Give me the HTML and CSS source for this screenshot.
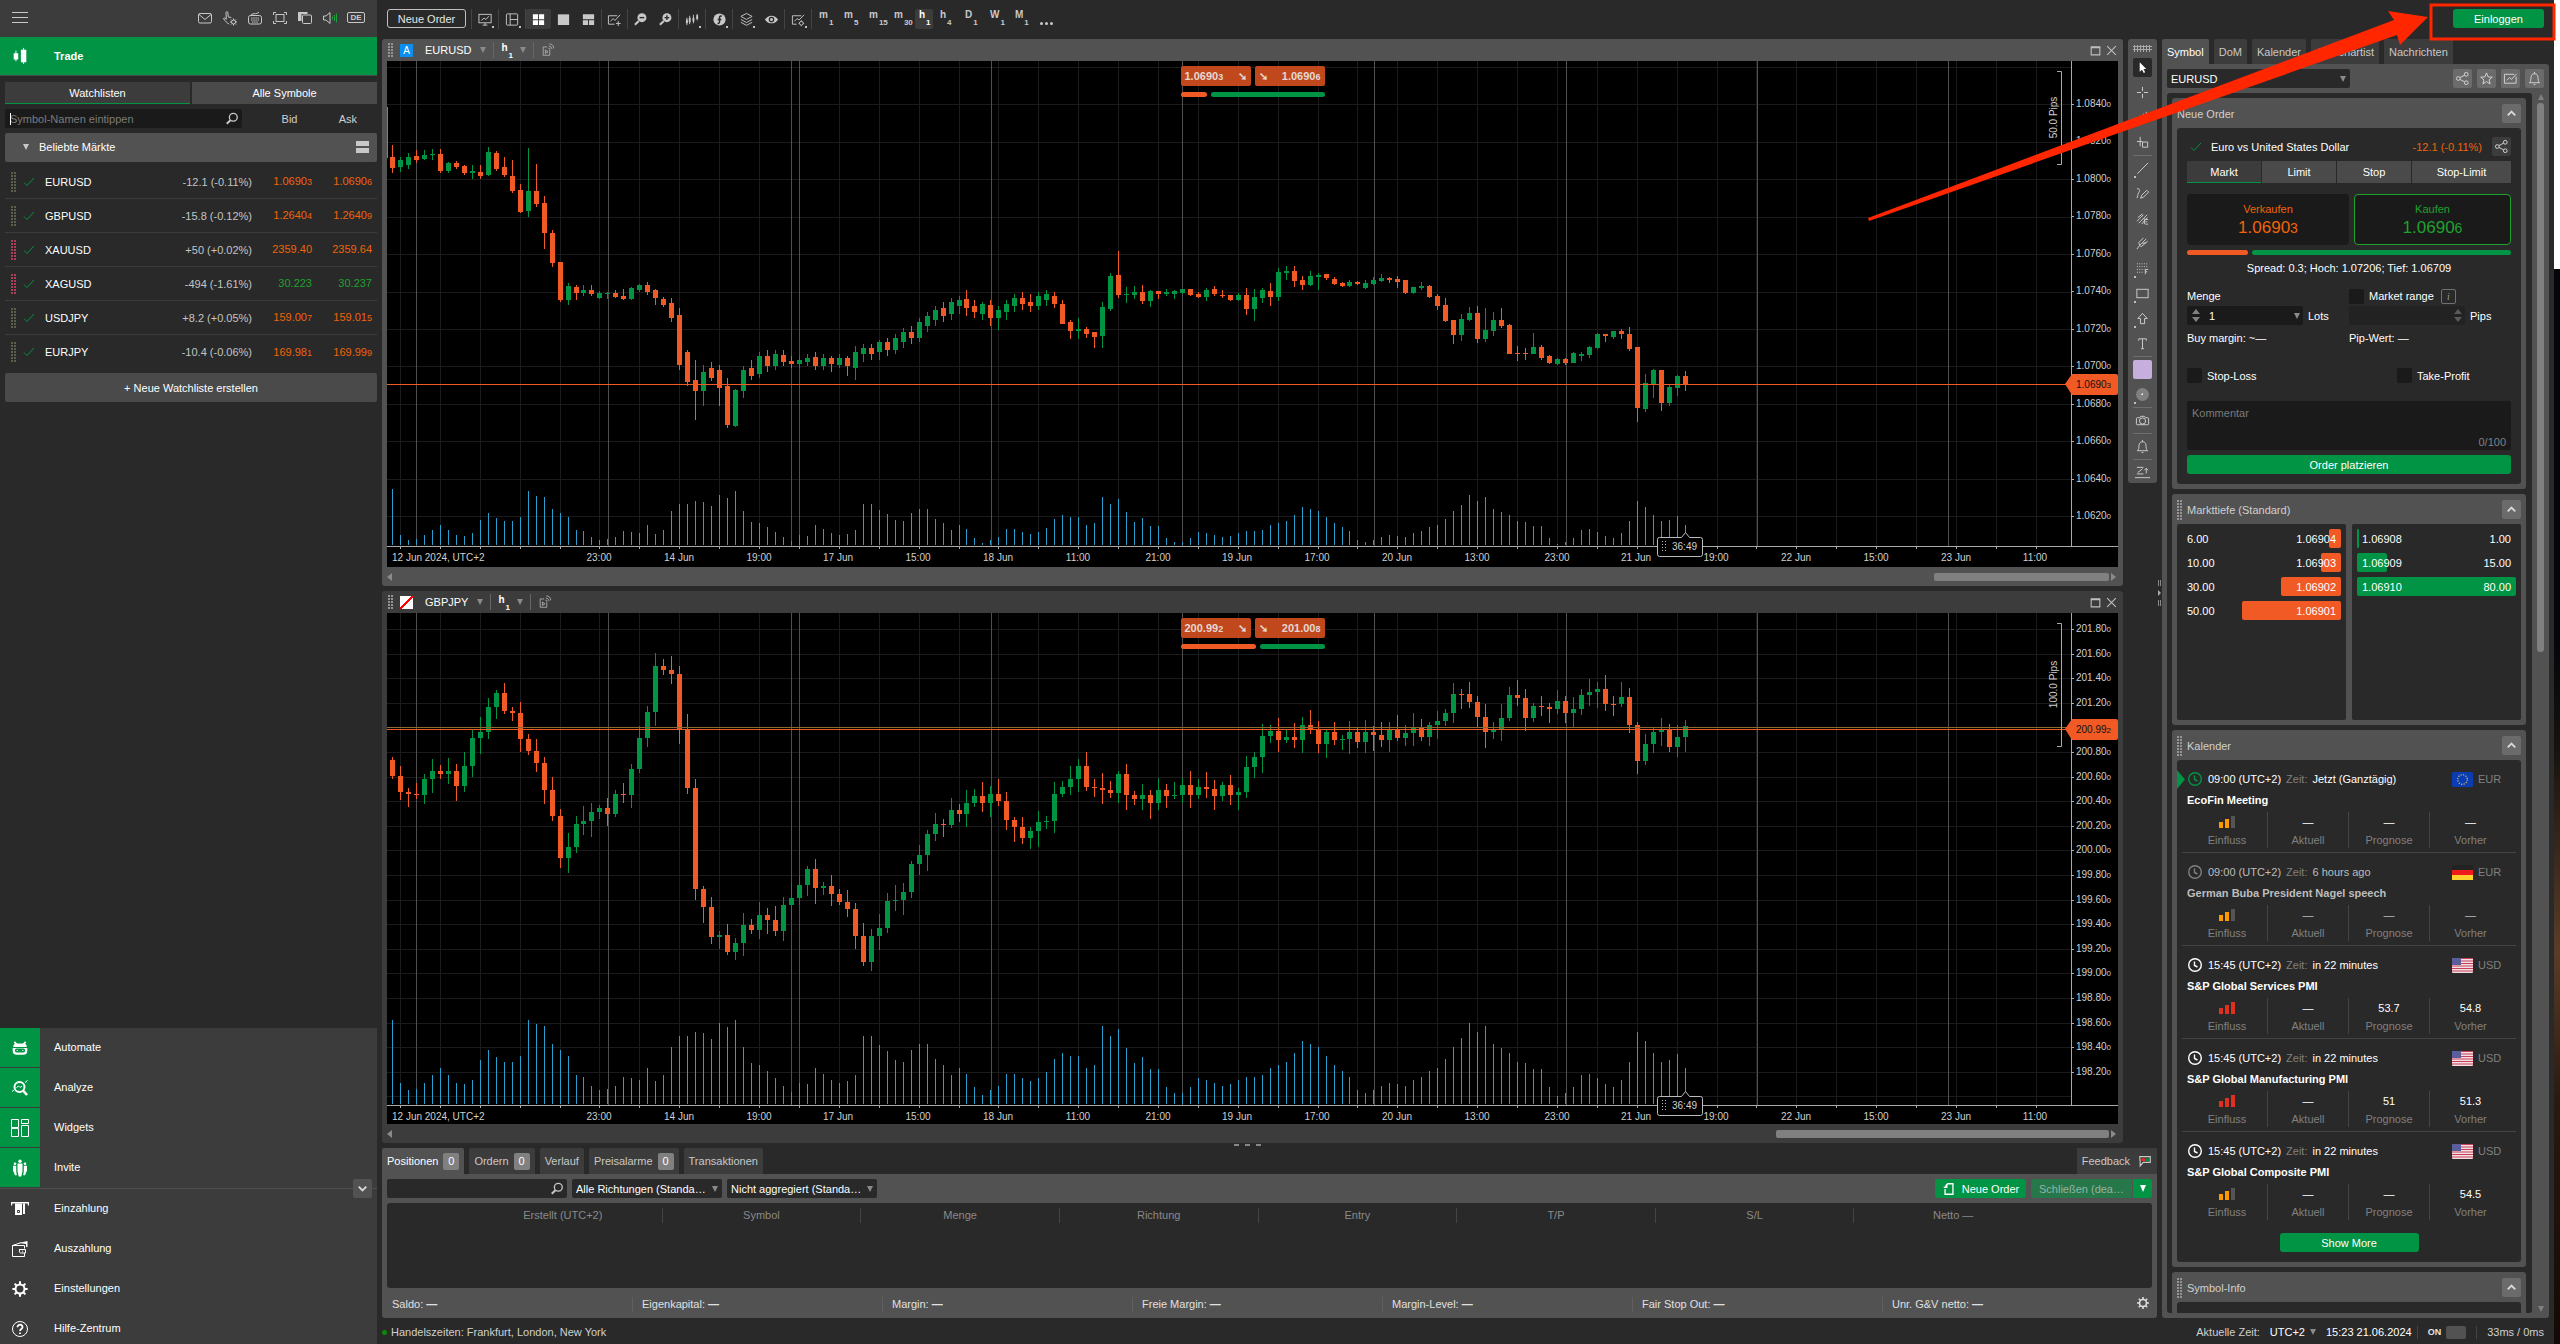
FILE: index.html
```html
<!DOCTYPE html>
<html lang="de">
<head>
<meta charset="utf-8">
<title>Trade</title>
<link rel="stylesheet" href="styles.css">
</head>
<body>
<svg class="defs" aria-hidden="true">
<defs>
<symbol id="i-mail" viewBox="0 0 16 16"><rect x="1.5" y="3.500" width="13" height="9.500" rx="1.500"/><path d="M2 4.500l6 5 6-5"/></symbol>
<symbol id="i-hand" viewBox="0 0 16 16"><path d="M7 14c-2-1-4-3-5.500-5.500.5-1 1.500-.5 2.800.8L4 2.500c.2-1.200 1.600-1.200 1.800 0L6.300 7l3 .5"/><circle cx="11.500" cy="12" r="2"/><path d="M11.500 8.500v1.500M11.500 14v1.500M8 12h1.500M13.500 12H15M9 9.500l1 1M13 13.500l1 1M14 9.500l-1 1M9 14.500l1-1"/></symbol>
<symbol id="i-keyboard" viewBox="0 0 16 16"><rect x="1.500" y="5.500" width="13" height="8.500" rx="2"/><path d="M4 8h8M4 10h8M5 12h6" stroke-dasharray="1.500 .7"/><path d="M4 5.500c0-3 6-.5 8-3.500"/></symbol>
<symbol id="i-full" viewBox="0 0 16 16"><rect x="4" y="4.500" width="8" height="7"/><path d="M1.500 5V2.500H4M12 2.500h2.500V5M14.500 11v2.500H12M4 13.500H1.500V11"/></symbol>
<symbol id="i-copy" viewBox="0 0 16 16"><rect x="5.500" y="5" width="9" height="8.500" rx="1"/><path class="fill" d="M1 2h9.500v2H4.500v7H1z"/></symbol>
<symbol id="i-sound" viewBox="0 0 16 16"><path d="M1.500 6v4h2.500l4 3.500v-11L4 6z"/><path class="green" d="M10.500 6.500v3M12.500 5v6M14.500 3.500v9"/></symbol>
<symbol id="i-search" viewBox="0 0 16 16"><circle cx="9.500" cy="6" r="4.500"/><path d="M6.200 9.500L2 13.500" stroke-width="2.200"/></symbol>
<symbol id="i-check" viewBox="0 0 12 10"><path d="M1 5.500L4 8.500 11 1"/></symbol>
<symbol id="i-candles" viewBox="0 0 16 20"><path class="fill" d="M1 7h5v7H1zM9 3h6v14H9z"/><path d="M3.500 4v12M12 1v18"/></symbol>
<symbol id="i-robot" viewBox="0 0 16 16"><path d="M3 2.500L5 5M13 2.500L11 5" stroke-width="1.500"/><path class="fill" d="M2 7a3 3 0 0 1 3-3h6a3 3 0 0 1 3 3H2zM1.500 8h13v2.500a3.500 3.500 0 0 1-3.500 3.500H5a3.500 3.500 0 0 1-3.500-3.500z"/><rect x="3.500" y="8.500" width="9" height="3.500" rx="1.500" fill="#009444" stroke="none"/><path d="M5 10.200h1M10 10.200h1"/></symbol>
<symbol id="i-analyze" viewBox="0 0 18 18"><circle cx="8.500" cy="8" r="5" stroke-width="2"/><path d="M12.500 12l3.500 4" stroke-width="2.600"/><path d="M5.500 8.500l2-1.500 1.500 1.500 2-1.500M1 12.500l2-1.500M14 3.500l2.500-2"/></symbol>
<symbol id="i-widgets" viewBox="0 0 18 18"><path d="M.5.500h7v8h-7zM.5 9.500h7v8h-7zM10.500.500h7v4h-7zM10.500 6.500h7v11h-7z"/></symbol>
<symbol id="i-invite" viewBox="0 0 18 18"><circle class="fill" cx="9" cy="2.200" r="1.700"/><circle class="fill" cx="4" cy="4.800" r="1.300"/><circle class="fill" cx="14" cy="4.800" r="1.300"/><path class="fill" d="M6.500 4.500h5v7.500l-1.200 5.500H7.700L6.500 12zM2 6.800h3.200v5.500l.6 4H4L2 11.500zM12.800 6.800H16v4.700L14 16.300h-1.800l.6-4z"/></symbol>
<symbol id="i-deposit" viewBox="0 0 18 16"><path d="M.5 4.500V1.800h17v2.700" stroke-width="1.400"/><path class="fill" d="M4 2.500h7V14H4zM12 2.500h2V13h-2z"/><path d="M6.500 9.500h2v2h-2z" stroke="#3c3c3c"/></symbol>
<symbol id="i-wallet" viewBox="0 0 18 18"><path d="M1.500 5.500h12v3M13.500 13v3.500h-12V5.500l9-3M8 9.500h6.500v3.500H9.500C8 13 8 9.500 9.500 9.500zM11 11.200h1"/><path class="fill" d="M8 3l8.500-2v6H15V4z"/></symbol>
<symbol id="i-gear" viewBox="0 0 16 16"><circle cx="8" cy="8" r="4" stroke-width="1.800"/><path stroke-width="1.800" d="M8 1.200v2.500M8 12.300v2.500M1.200 8h2.500M12.300 8h2.500M3.200 3.200l1.700 1.700M11.100 11.100l1.700 1.700M3.200 12.800l1.700-1.700M11.100 4.900l1.700-1.700"/></symbol>
<symbol id="i-help" viewBox="0 0 18 18"><circle cx="9" cy="9" r="7.500"/><path stroke-width="1.800" d="M6.500 7.200c0-3.400 5-3.200 5 0 0 1.800-2.500 1.800-2.500 3.800M9 12.500v1.500"/></symbol>
<symbol id="i-monitor" viewBox="0 0 16 16"><rect x="1" y="2.500" width="13" height="9"/><path d="M3.500 9l3-2.500 2 1.500 3-3.500M5 14h5M7.500 11.500V14"/></symbol>
<symbol id="i-layout" viewBox="0 0 16 16"><rect x="1.500" y="2" width="12" height="12" rx="1"/><path d="M5.500 2v12M5.500 8h8"/></symbol>
<symbol id="i-grid4" viewBox="0 0 16 16"><path class="fill" d="M2 2.500h5.500v5.200H2zM8.500 2.500H14v5.200H8.500zM2 8.700h5.500v5.200H2zM8.500 8.700H14v5.200H8.500z"/></symbol>
<symbol id="i-one" viewBox="0 0 16 16"><path class="fill" d="M2 2.500h12v11.400H2z"/></symbol>
<symbol id="i-three" viewBox="0 0 16 16"><path class="fill" d="M2 2.500h12v5.200H2zM2 8.700h5.500v5.200H2zM8.500 8.700H14v5.200H8.500z"/></symbol>
<symbol id="i-chartplus" viewBox="0 0 16 16"><path d="M8 13H1.500V4H11M3.500 10l3-3 2 2L14 3M12 9.500v5.500M9.500 12.200h5"/></symbol>
<symbol id="i-zoomout" viewBox="0 0 16 16"><circle class="fill" cx="9.500" cy="6" r="4.800"/><path d="M6.200 9.500L2 13.500" stroke-width="2.200"/><path d="M7 6h5" stroke="#292929" stroke-width="1.500"/></symbol>
<symbol id="i-zoomin" viewBox="0 0 16 16"><circle class="fill" cx="9.500" cy="6" r="4.800"/><path d="M6.200 9.500L2 13.500" stroke-width="2.200"/><path d="M7 6h5M9.500 3.500v5" stroke="#292929" stroke-width="1.500"/></symbol>
<symbol id="i-bars" viewBox="0 0 16 16"><path d="M2 6v8M5 4v9M9 3v9M13 2v7"/><path class="fill" d="M1 8h2v4H1zM4 6h2v5H4zM8 6h2v4H8zM12 3.500h2v4h-2z"/></symbol>
<symbol id="i-f" viewBox="0 0 16 16"><circle class="fill" cx="8" cy="8" r="6.500"/><path d="M10.500 4.500C8.500 3.500 8 5 8 6.500v4c0 1.500-1 2-2 1.500M6 8h4" stroke="#292929" stroke-width="1.600"/></symbol>
<symbol id="i-layers" viewBox="0 0 16 16"><path d="M8 1.500l6 3.200-6 3.200-6-3.200zM2 8l6 3.200L14 8M2 11l6 3.200 6-3.200"/></symbol>
<symbol id="i-eye" viewBox="0 0 16 16"><path class="fill" d="M1 8c3.500-5.500 10.500-5.500 14 0-3.500 5.500-10.500 5.500-14 0z"/><circle cx="8" cy="8" r="2.300" stroke="#292929" stroke-width="1.400"/></symbol>
<symbol id="i-chartgear" viewBox="0 0 16 16"><path d="M6 13H1.500V4H11M3.500 10l3-3 2 1.500L14 3"/><circle cx="11" cy="12" r="2"/><path d="M11 8.800v1M11 14.200v1M8 12h1M13 12h1"/></symbol>
<symbol id="i-broadcast" viewBox="0 0 16 16"><path d="M7 4.500H2.500V14H10V8M5 8v4l3-2zM8.500 6h1.500v1.500M9 3.500c2 0 3.500 1.500 3.500 3.500M9.500 1c3 0 5 2 5 5"/></symbol>
<symbol id="i-max" viewBox="0 0 12 12"><path d="M2 2.500h8v7.500H2zM2 3.500h8" /></symbol>
<symbol id="i-close" viewBox="0 0 12 12"><path d="M2 2l8 8M10 2l-8 8"/></symbol>
<symbol id="i-share" viewBox="0 0 16 16"><circle cx="3.500" cy="8" r="2"/><circle cx="12" cy="3.500" r="2"/><circle cx="12" cy="12.500" r="2"/><path d="M5.300 7l5-2.600M5.300 9l5 2.600"/></symbol>
<symbol id="i-star" viewBox="0 0 16 16"><path d="M8 2l1.700 4.300 4.500.2-3.500 2.900 1.200 4.400L8 11.300l-3.900 2.500 1.200-4.400L1.800 6.500l4.500-.2z"/></symbol>
<symbol id="i-chart" viewBox="0 0 16 16"><path d="M14 6v7H1.500V3.500H12M4 10l3-3 2 2 5.500-6"/></symbol>
<symbol id="i-bell" viewBox="0 0 16 16"><path d="M2.500 12.500C4.500 11 4 9 4.300 6.500 4.600 4 6 3 8 3s3.400 1 3.700 3.500c.3 2.500-.2 4.500 1.800 6zM8 1v2M7 14.500h2"/></symbol>
<symbol id="i-up" viewBox="0 0 12 12"><path d="M3 7.500l3-3 3 3" stroke-width="1.500"/></symbol>
<symbol id="i-down" viewBox="0 0 12 12"><path d="M3 4.500l3 3 3-3" stroke-width="1.500"/></symbol>
<symbol id="i-clock" viewBox="0 0 16 16"><circle cx="8" cy="8" r="6.300" stroke-width="1.400"/><path d="M7.500 4.500v4l3 1.500" stroke-width="1.400"/></symbol>
<symbol id="i-cursor" viewBox="0 0 16 16"><path class="fill" d="M5 2.500v10l2.500-2.200 1.800 3.500 1.500-.8-1.700-3.400H12z"/></symbol>
<symbol id="i-cross" viewBox="0 0 16 16"><path d="M8 2v4.500M8 9.500V14M2 8h4.500M9.500 8H14"/></symbol>
<symbol id="i-diag" viewBox="0 0 16 16"><path d="M3 13l10-7M6 12V6M9 10V4M12 9V2"/></symbol>
<symbol id="i-crossbox" viewBox="0 0 16 16"><path d="M5.500 2v10M2 7h6M8 7.500h5.500v5.500H8z"/></symbol>
<symbol id="i-line" viewBox="0 0 16 16"><path d="M2.500 13.500L14 2"/></symbol>
<symbol id="i-pen" viewBox="0 0 16 16"><path d="M6 13l1-3 5.500-5.500 2 2L9 12zM2 3c3-1 3.500 2 2 4s-1 5-2 6"/></symbol>
<symbol id="i-trend" viewBox="0 0 16 16"><path d="M2 11l7-7M4 13l9-9M7 14l6-7M3 7l5-4M10 8v6M11 9h3M11 11.500h2M11 14h3"/></symbol>
<symbol id="i-fork" viewBox="0 0 16 16"><path d="M2 14l3-4 7-7M5 10l1.500 1.500 7-6M5 10l-1-3 5-5M8 8l4-1"/></symbol>
<symbol id="i-dots" viewBox="0 0 16 16"><path d="M2 3h12M2 6h12M2 9h8M2 12h6" stroke-dasharray="1 1.500"/><path d="M11 14V9h3M11 11.500h2"/></symbol>
<symbol id="i-rect" viewBox="0 0 16 16"><rect x="2" y="3.500" width="12" height="9"/></symbol>
<symbol id="i-arrowup" viewBox="0 0 16 16"><path d="M8 2.500L3 8h2.800v5.500h4.400V8H13z"/></symbol>
<symbol id="i-text" viewBox="0 0 16 16"><path d="M4 5V3h8v2M8 3v10.500M6.500 13.500h3"/></symbol>
<symbol id="i-camera" viewBox="0 0 16 16"><path d="M2.500 5H5l1-1.500h4L11 5h2.500a1 1 0 0 1 1 1v5.500a1 1 0 0 1-1 1h-11a1 1 0 0 1-1-1V6a1 1 0 0 1 1-1z"/><circle cx="8" cy="8.500" r="3.300"/></symbol>
<symbol id="i-sort" viewBox="0 0 16 16"><path d="M2 2.500h7M2 9.500h7M0 13.500h16M3 8l5-4M12 9V3.500M10 5.500l2-2 2 2"/></symbol>
<symbol id="i-doc" viewBox="0 0 16 16"><path d="M3.500 8v6h9V2h-6L4 4.500M2 6h3.500V3" stroke-width="1.500"/></symbol>
<symbol id="i-feedback" viewBox="0 0 16 14"><path d="M2 1.500h12v6.500H6L2.500 12V8z" stroke-width="1.300"/><path d="M4 3.500h4v3H4z" fill="#f22" stroke="none"/><path d="M8.500 3.500h4v3h-4z" fill="#009444" stroke="none"/></symbol>
<symbol id="f-eu" viewBox="0 0 21 15"><rect width="21" height="15" rx="1.500" fill="#0a3cb4" stroke="none"/><circle cx="10.500" cy="7.500" r="4.800" fill="none" stroke="#d9c64a" stroke-width="1.200" stroke-dasharray="1.200 1.310"/></symbol>
<symbol id="f-de" viewBox="0 0 21 15"><path fill="#222" stroke="none" d="M0 0h21v5H0z"/><path fill="#f01c1c" stroke="none" d="M0 5h21v5H0z"/><path fill="#fdd22f" stroke="none" d="M0 10h21v5H0z"/></symbol>
<symbol id="f-us" viewBox="0 0 21 15"><rect width="21" height="15" rx="1" fill="#f2dfe2" stroke="none"/><path d="M0 .5h21M0 3h21M0 5.500h21M0 8h21M0 10.500h21M0 13h21" stroke="#c8405a" stroke-width="1.200"/><rect width="9" height="7" fill="#5a5f9c" stroke="none"/></symbol>
</defs>
</svg>

<div class="app">
  <aside class="nav">
    <header class="nav-top">
      <button class="bare burger" aria-label="Menü"><i></i><i></i><i></i></button>
      <div class="nav-icons">
        <svg><use href="#i-mail"/></svg><svg><use href="#i-hand"/></svg><svg><use href="#i-keyboard"/></svg><svg><use href="#i-full"/></svg><svg><use href="#i-copy"/></svg><svg><use href="#i-sound"/></svg><button class="bare lang">DE</button>
      </div>
    </header>
    <a href="#" class="nav-trade"><svg><use href="#i-candles"/></svg>Trade</a>
    <div class="watch">
      <div class="tabs2"><button class="on">Watchlisten</button><button>Alle Symbole</button></div>
      <div class="watch-search">
        <label class="search"><input type="text" placeholder="Symbol-Namen eintippen" aria-label="Symbol-Namen eintippen"><span class="caret"></span><svg><use href="#i-search"/></svg></label>
        <span>Bid</span><span>Ask</span>
      </div>
      <button class="watch-group"><span class="tri"></span>Beliebte Märkte<span class="rows"></span></button>
      <ul class="watch-list" id="watch"></ul>
      <button class="watch-add">+ Neue Watchliste erstellen</button>
    </div>
    <nav class="menu">
      <a href="#" class="app-link"><span><svg><use href="#i-robot"/></svg></span>Automate</a>
      <a href="#" class="app-link"><span><svg><use href="#i-analyze"/></svg></span>Analyze</a>
      <a href="#" class="app-link"><span><svg><use href="#i-widgets"/></svg></span>Widgets</a>
      <a href="#" class="app-link"><span><svg><use href="#i-invite"/></svg></span>Invite</a>
      <div class="menu-rest">
        <button class="sq fold" aria-label="Einklappen"><svg><use href="#i-down"/></svg></button>
        <a href="#"><span><svg><use href="#i-deposit"/></svg></span>Einzahlung</a>
        <a href="#"><span><svg><use href="#i-wallet"/></svg></span>Auszahlung</a>
        <a href="#"><span><svg><use href="#i-gear"/></svg></span>Einstellungen</a>
        <a href="#"><span><svg><use href="#i-help"/></svg></span>Hilfe-Zentrum</a>
      </div>
    </nav>
  </aside>

  <div class="work">
    <header class="toolbar">
      <button class="neworder">Neue Order</button>
      <div class="tools">
        <span class="grp"><button class="sub"><svg><use href="#i-monitor"/></svg></button></span>
        <span class="grp"><button class="sub"><svg><use href="#i-layout"/></svg></button></span>
        <span class="grp"><button class="on"><svg><use href="#i-grid4"/></svg></button><button><svg><use href="#i-one"/></svg></button><button><svg><use href="#i-three"/></svg></button></span>
        <span class="grp"><button><svg><use href="#i-chartplus"/></svg></button></span>
        <span class="grp"><button><svg><use href="#i-zoomout"/></svg></button><button><svg><use href="#i-zoomin"/></svg></button></span>
        <span class="grp"><button class="sub"><svg><use href="#i-bars"/></svg></button></span>
        <span class="grp"><button class="sub"><svg><use href="#i-f"/></svg></button></span>
        <span class="grp"><button class="sub"><svg><use href="#i-layers"/></svg></button><button><svg><use href="#i-eye"/></svg></button></span>
        <span class="grp"><button class="sub"><svg><use href="#i-chartgear"/></svg></button></span>
        <span class="grp frames"><button>m<sub>1</sub></button><button>m<sub>5</sub></button><button>m<sub>15</sub></button><button>m<sub>30</sub></button><button class="on">h<sub>1</sub></button><button>h<sub>4</sub></button><button>D<sub>1</sub></button><button>W<sub>1</sub></button><button>M<sub>1</sub></button><button class="more" aria-label="Mehr"><i></i><i></i><i></i></button></span>
      </div>
      <button class="login">Einloggen</button>
    </header>

    <div class="body">
      <div class="center">
        <div class="upper">
          <div class="charts">
            <section class="chart active">
              <header><span class="grip"></span><span class="tag-a">A</span><b>EURUSD</b><span class="tri"></span><i></i><span class="tf">h<sub>1</sub></span><span class="tri"></span><i></i><svg><use href="#i-broadcast"/></svg><span class="win"><svg><use href="#i-max"/></svg><svg><use href="#i-close"/></svg></span></header>
              <div class="plot"><svg id="plot1" viewBox="0 0 1731 506" preserveAspectRatio="xMaxYMin slice"></svg>
                <div class="quote"><button><span>1.0690<small>3</small></span><em>➘</em></button><button><em>➘</em><span>1.0690<small>6</small></span></button><div class="split"><i style="width:26px"></i><i></i></div></div>
              </div>
              <div class="hscroll"><span class="l"></span><i style="width:175px"></i><span class="r"></span></div>
            </section>
            <section class="chart">
              <header><span class="grip"></span><span class="tag-n"></span><b>GBPJPY</b><span class="tri"></span><i></i><span class="tf">h<sub>1</sub></span><span class="tri"></span><i></i><svg><use href="#i-broadcast"/></svg><span class="win"><svg><use href="#i-max"/></svg><svg><use href="#i-close"/></svg></span></header>
              <div class="plot"><svg id="plot2" viewBox="0 0 1731 512" preserveAspectRatio="xMaxYMin slice"></svg>
                <div class="quote"><button><span>200.99<small>2</small></span><em>➘</em></button><button><em>➘</em><span>201.00<small>8</small></span></button><div class="split"><i style="width:75px"></i><i></i></div></div>
              </div>
              <div class="hscroll"><span class="l"></span><i style="width:333px"></i><span class="r"></span></div>
            </section>
          </div>
          <div class="strip">
            <span class="dots"></span>
            <button class="on"><svg><use href="#i-cursor"/></svg></button>
            <button><svg><use href="#i-cross"/></svg></button>
            <button><svg><use href="#i-diag"/></svg></button>
            <button><svg><use href="#i-crossbox"/></svg></button>
            <hr>
            <button class="sub"><svg><use href="#i-line"/></svg></button>
            <button><svg><use href="#i-pen"/></svg></button>
            <button><svg><use href="#i-trend"/></svg></button>
            <button><svg><use href="#i-fork"/></svg></button>
            <button class="sub"><svg><use href="#i-dots"/></svg></button>
            <button class="sub"><svg><use href="#i-rect"/></svg></button>
            <button class="sub"><svg><use href="#i-arrowup"/></svg></button>
            <button><svg><use href="#i-text"/></svg></button>
            <hr>
            <button class="swatch" aria-label="Farbe"></button>
            <button class="sub"><span class="dot"></span></button>
            <hr>
            <button><svg><use href="#i-camera"/></svg></button>
            <hr>
            <button><svg><use href="#i-bell"/></svg></button>
            <hr>
            <button><svg><use href="#i-sort"/></svg></button>
          </div>
          <span class="vhandle"><i></i><b></b><i></i></span>
        </div>
        <section class="positions">
          <span class="hhandle"><i></i><i></i><i></i></span>
          <div class="ptabs"><button class="on">Positionen<span>0</span></button><button>Ordern<span>0</span></button><button>Verlauf</button><button>Preisalarme<span>0</span></button><button>Transaktionen</button><a href="#" class="feedback">Feedback<svg><use href="#i-feedback"/></svg></a></div>
          <div class="pbody">
            <div class="filters">
              <label class="search"><input type="text" aria-label="Suche"><svg><use href="#i-search"/></svg></label>
              <label class="select"><select aria-label="Richtung"><option>Alle Richtungen (Standa…</option></select></label>
              <label class="select"><select aria-label="Aggregation"><option>Nicht aggregiert (Standa…</option></select></label>
              <button class="pnew"><svg><use href="#i-doc"/></svg>Neue Order</button>
              <button class="pclose">Schließen (dea…</button><button class="pmore" aria-label="Mehr"></button>
            </div>
            <table class="ptable"><thead><tr><th class="pad"></th><th>Erstellt (UTC+2)</th><th>Symbol</th><th>Menge</th><th>Richtung</th><th>Entry</th><th>T/P</th><th>S/L</th><th class="last">Netto —</th><th class="end"></th></tr></thead></table>
            <div class="totals"><span>Saldo: <b>—</b></span><span>Eigenkapital: <b>—</b></span><span>Margin: <b>—</b></span><span>Freie Margin: <b>—</b></span><span>Margin-Level: <b>—</b></span><span>Fair Stop Out: <b>—</b></span><span>Unr. G&amp;V netto: <b>—</b></span><button class="bare" aria-label="Einstellungen"><svg><use href="#i-gear"/></svg></button></div>
          </div>
        </section>
      </div>

      <aside class="side">
        <div class="stabs"><button class="on">Symbol</button><button>DoM</button><button>Kalender</button><button>Autochartist</button><button>Nachrichten</button></div>
        <div class="sbody">
          <div class="spick">
            <label class="select"><select aria-label="Symbol"><option>EURUSD</option></select></label>
            <button class="sq"><svg><use href="#i-share"/></svg></button><button class="sq"><svg><use href="#i-star"/></svg></button><button class="sq"><svg><use href="#i-chart"/></svg></button><button class="sq"><svg><use href="#i-bell"/></svg></button>
          </div>
          <div class="scroller">
            <div class="cards">
              <section class="card">
                <h2>Neue Order<button class="sq" aria-label="Einklappen"><svg><use href="#i-up"/></svg></button></h2>
                <form class="order">
                  <div class="pair"><svg class="ok"><use href="#i-check"/></svg><span>Euro vs United States Dollar</span><em>-12.1 (-0.11%)</em><button type="button" class="sq"><svg><use href="#i-share"/></svg></button></div>
                  <div class="otabs"><button type="button" class="on">Markt</button><button type="button">Limit</button><button type="button">Stop</button><button type="button">Stop-Limit</button></div>
                  <div class="deal"><button type="button" class="sell">Verkaufen<b>1.0690<small>3</small></b></button><button type="button" class="buy">Kaufen<b>1.0690<small>6</small></b></button></div>
                  <div class="split"><i style="width:61px"></i><i></i></div>
                  <p class="spread">Spread: 0.3; Hoch: 1.07206; Tief: 1.06709</p>
                  <div class="qty">
                    <div><label class="ln" for="qty">Menge</label><div class="field"><span class="num"><input id="qty" type="text" value="1"><i class="sp"></i><span class="tri"></span></span>Lots</div><p>Buy margin: ~—</p></div>
                    <div><div class="ln"><label><input type="checkbox">Market range</label><span class="info">i</span></div><div class="field"><span class="num pips"><input type="text" disabled aria-label="Pips"><i class="sp"></i></span>Pips</div><p>Pip-Wert: —</p></div>
                  </div>
                  <div class="stops"><label><input type="checkbox">Stop-Loss</label><label><input type="checkbox">Take-Profit</label></div>
                  <div class="comment"><textarea placeholder="Kommentar" aria-label="Kommentar"></textarea><span>0/100</span></div>
                  <button type="button" class="green-btn">Order platzieren</button>
                </form>
              </section>
              <section class="card">
                <h2><span class="grip"></span>Markttiefe (Standard)<button class="sq" aria-label="Einklappen"><svg><use href="#i-up"/></svg></button></h2>
                <div class="depth">
                  <ul><li>6.00<span>1.06904</span><i style="width:12px"></i></li><li>10.00<span>1.06903</span><i style="width:20px"></i></li><li>30.00<span>1.06902</span><i style="width:60px"></i></li><li>50.00<span>1.06901</span><i style="width:99px"></i></li></ul>
                  <ul class="ask"><li><span>1.06908</span>1.00<i style="width:2px"></i></li><li><span>1.06909</span>15.00<i style="width:30px"></i></li><li><span>1.06910</span>80.00<i style="width:100%"></i></li></ul>
                </div>
              </section>
              <section class="card">
                <h2><span class="grip"></span>Kalender<button class="sq" aria-label="Einklappen"><svg><use href="#i-up"/></svg></button></h2>
                <div class="cal"><div id="events"></div><button class="green-btn">Show More</button></div>
              </section>
              <section class="card">
                <h2><span class="grip"></span>Symbol-Info<button class="sq" aria-label="Einklappen"><svg><use href="#i-up"/></svg></button></h2>
                <div class="empty"></div>
              </section>
            </div>
            <div class="vscroll"><span class="u"></span><i></i><span class="d"></span></div>
          </div>
        </div>
      </aside>
    </div>

    <footer class="status"><span class="live"></span>Handelszeiten: Frankfurt, London, New York
      <div class="clock"><span>Aktuelle Zeit:</span><button class="bare">UTC+2<span class="tri"></span></button><strong>15:23 21.06.2024</strong><i></i><label>ON<input type="checkbox"></label><i></i><span>33ms / 0ms</span></div>
    </footer>
  </div>
  <div class="edge"></div>
  <svg class="pointer" viewBox="0 0 700 224"><path d="M8 218L534 20l-6-9 40 6-28 28-3-10L9 221z" fill="#ff2600" stroke="none"/><rect x="571" y="5" width="123" height="34" fill="none" stroke="#ff2600" stroke-width="3"/></svg>
</div>
<script src="script.js"></script>
</body>
</html>
```
FILE: styles.css
```css
* { box-sizing: border-box; }
body { margin: 0; background: #292929; color: #e6e6e6; font: 11px/14px "Liberation Sans", Arial, sans-serif; }
button, input, select, textarea { font: inherit; color: inherit; border: 0; background: none; padding: 0; margin: 0; border-radius: 0; }
ul, p, h2 { margin: 0; padding: 0; list-style: none; font: inherit; }
a { color: inherit; text-decoration: none; }
svg { width: 16px; height: 16px; flex: none; fill: none; stroke: currentColor; stroke-width: 1; }
.fill { fill: currentColor; stroke: none; }
.green { stroke: #1f9d3f; }
.defs { position: absolute; width: 0; height: 0; }
small { font-size: 9px; }
.tri { width: 0; height: 0; border: 3px solid transparent; border-top: 6px solid #8a8a8a; border-bottom: 0; flex: none; }
.sq { width: 19px; height: 19px; border-radius: 2px; background: #6b6b6b; color: #d8d8d8; display: grid; place-items: center; flex: none; }
.grip { width: 5px; height: 20px; flex: none; background: repeating-linear-gradient(#959595 0 2px, transparent 2px 3px); -webkit-mask: linear-gradient(90deg, #000 2px, transparent 2px 3px, #000 3px); mask: linear-gradient(90deg, #000 2px, transparent 2px 3px, #000 3px); }

.app { position: relative; display: flex; height: 100vh; overflow: hidden; }
.nav { width: 377px; flex: none; display: flex; flex-direction: column; }
.nav-top { height: 37px; flex: none; background: #3c3c3c; display: flex; align-items: center; justify-content: space-between; padding: 0 12px 2px; }
.burger { display: grid; gap: 4px; width: 16px; }
.burger i { height: 1px; background: #c8c8c8; }
.nav-icons { display: flex; gap: 9px; color: #c8c8c8; align-items: center; }
.lang { border: 1px solid #c8c8c8; border-radius: 2px; width: 18px; height: 11px; font-size: 8px; line-height: 9px; font-weight: bold; }
.nav-trade { height: 39px; flex: none; background: #009444; color: #fff; font-weight: bold; display: flex; align-items: center; gap: 26px; padding-left: 12px; border-bottom: 1px solid #4a4a4a; }
.nav-trade svg { width: 16px; height: 18px; }
.watch { flex: 1; padding: 6px 0 0 5px; min-height: 0; }
.tabs2 { display: grid; grid-template-columns: 1fr 1fr; gap: 2px; }
.tabs2 button, .otabs button { height: 22px; background: #4a4a4a; color: #fff; }
.tabs2 .on, .otabs .on { background: #3c3c3c; border-bottom: 1px solid #009444; }
.watch-search { display: flex; align-items: center; margin: 5px 0 5px; color: #d0d0d0; }
.search { position: relative; width: 240px; height: 19px; background: #1a1a1a; border-radius: 2px; display: flex; align-items: center; padding: 0 3px 0 5px; color: #c8c8c8; }
.search input { flex: 1; min-width: 0; outline: 0; }
.search svg { width: 14px; height: 14px; stroke-width: 1.5; }
::placeholder { color: #7a7a7a; opacity: 1; }
.caret { position: absolute; left: 5px; top: 4px; width: 1px; height: 12px; background: #fff; }
.watch-search > span { width: 59px; text-align: center; }
.watch-search > span:first-of-type { margin-left: 18px; }
.watch-group { width: 100%; height: 29px; border-radius: 2px; background: #525252; display: flex; align-items: center; padding: 0 8px 1px 18px; gap: 10px; color: #fff; }
.watch-group .tri { border-top-color: #c8c8c8; }
.rows { margin-left: auto; width: 13px; height: 12px; background: linear-gradient(#c8c8c8 5px, transparent 5px 7px, #c8c8c8 7px); }
.watch-list { padding-top: 3px; }
.watch-list li { height: 34px; display: flex; align-items: center; border-bottom: 1px solid #3c3c3c; padding: 0 5px 0 6px; color: #fff; }
.watch-list li:last-child { border: 0; }
.watch-list .grip { background: repeating-linear-gradient(#5e5e4e 0 2px, transparent 2px 3px); }
.watch-list .hot .grip { background: repeating-linear-gradient(#a8405a 0 2px, transparent 2px 3px); }
.ok { width: 12px; height: 10px; margin: 0 10px 0 7px; color: #009444; stroke-width: 1; }
.watch-list em { margin-left: auto; font-style: normal; color: #c4c4c4; }
.watch-list b { width: 60px; text-align: right; font-weight: normal; color: #ee6409; }
.watch-list .upc b { color: #1fa12e; }
.watch-add { width: 100%; height: 29px; background: #4a4a4a; border-radius: 2px; margin-top: 4px; color: #fff; }
.menu { background: #3c3c3c; flex: none; color: #fff; }
.menu a { display: flex; height: 40px; align-items: center; gap: 14px; padding-bottom: 2px; }
.menu a span { width: 40px; height: 39px; display: grid; place-items: center; align-self: flex-start; color: #fff; }
.menu svg { width: 18px; height: 18px; }
.menu .app-link span { background: #009444; }
.menu-rest { position: relative; border-top: 1px solid #4e4e4e; height: 156px; overflow: clip; overflow-clip-margin: 12px; }
.fold { position: absolute; right: 5px; top: -10px; background: #525252; }
.fold svg, .sq svg { width: 15px; height: 15px; }

.work { flex: 1; min-width: 0; display: flex; flex-direction: column; padding: 0 5px; }
.toolbar { height: 39px; flex: none; display: flex; padding: 0 5px; }
.neworder { width: 79px; height: 19px; margin: 9px 5px 0 0; border: 1px solid #c0c0c0; border-radius: 3px; }
.tools { display: flex; height: 20px; margin-top: 9px; color: #c8c8c8; }
.grp { display: flex; border-left: 1px solid #444; }
.tools button { width: 25px; position: relative; display: grid; place-items: center; }
.tools button.sub { width: 26px; }
.tools svg { width: 15px; height: 15px; }
.tools .on { background: #3c3c3c; color: #fff; border-radius: 2px; }
.sub { position: relative; }
.sub::after { content: ""; position: absolute; right: 4px; bottom: 1px; border: 1px solid #c0c0c0; }
.frames { font-size: 10px; font-weight: bold; padding-left: 3px; }
.tools .frames button { display: block; line-height: 12px; text-align: left; padding: 0 0 8px 4px; }
.frames sub, .tf sub { font-size: 8px; vertical-align: -7px; line-height: 1px; margin-left: 1px; }
.tools .frames .on { width: 18px; margin: 0 3px 0 0; }
.tools .frames .more { display: flex; gap: 2px; padding: 8px 0 0 4px; }
.more i { width: 3px; height: 3px; border-radius: 50%; background: #c8c8c8; }
.login { margin: 9px 0 0 auto; width: 91px; height: 19px; background: #009444; color: #fff; border-radius: 3px; }
.body { flex: 1; min-height: 0; display: flex; gap: 5px; }
.center { flex: 1; min-width: 0; display: flex; flex-direction: column; gap: 5px; }
.upper { flex: 1; min-height: 0; display: flex; gap: 5px; position: relative; }
.charts { flex: 1; min-width: 0; display: grid; grid-template-rows: minmax(0, 547fr) minmax(0, 552fr); gap: 5px; }
.chart { background: #3c3c3c; border-radius: 3px; display: flex; flex-direction: column; padding: 0 5px; min-width: 0; }
.chart.active { background: #525252; }
.chart header { height: 22px; flex: none; display: flex; align-items: center; gap: 7px; color: #fff; }
.chart header b { font-weight: normal; margin-right: 2px; }
.chart header i { width: 1px; height: 16px; background: #666; }
.chart header .grip { margin-left: 1px; height: 15px; }
.chart header svg { width: 14px; height: 14px; color: #b0b0b0; }
.tag-a { width: 13px; height: 13px; background: #0a8ef0; display: grid; place-items: center; font-size: 10px; color: #fff; margin-right: 5px; }
.tag-n { width: 13px; height: 13px; background: linear-gradient(to bottom right, #fff 44%, #f00 44% 56%, #fff 56%); margin-right: 5px; }
.tf { font-weight: bold; font-size: 10px; margin-top: -4px; }
.win { margin-left: auto; display: flex; gap: 3px; }
.chart header .win svg { width: 13px; height: 13px; color: #c0c0c0; }
.plot { flex: 1; min-height: 0; background: #000; position: relative; overflow: hidden; }
.plot > svg { width: 100%; height: 100%; display: block; }
.plot text { fill: #d0d0d0; stroke: none; font-size: 10px; }
.plot text tspan { font-size: 8px; }
.quote { position: absolute; top: 5px; left: 50%; width: 144px; margin-left: -72px; display: grid; grid-template-columns: 1fr 1fr; gap: 6px 4px; }
.quote button { height: 20px; border-radius: 2px; background: #c1481d; color: #e4d8d2; font-weight: bold; display: flex; justify-content: space-between; align-items: center; padding: 0 4px; }
.quote em { font-style: normal; }
.split { display: flex; gap: 4px; height: 5px; grid-column: 1 / -1; }
.split i { background: #f15a24; border-radius: 3px; }
.split i + i { background: #009444; flex: 1; }
.hscroll { height: 19px; flex: none; display: flex; align-items: center; }
.hscroll i { height: 8px; margin-left: auto; margin-right: 2px; border-radius: 2px; background: #808080; }
.hscroll span { border: 4px solid transparent; }
.hscroll .l { border-right: 5px solid #8a8a8a; border-left: 0; }
.hscroll .r { border-left: 5px solid #8a8a8a; border-right: 2px solid transparent; }
.strip { width: 29px; flex: none; align-self: flex-start; background: #525252; border-radius: 3px; padding: 6px 5px 1px; display: flex; flex-direction: column; gap: 6px; color: #d0d0d0; }
.strip button { width: 19px; height: 19px; display: grid; place-items: center; border-radius: 2px; }
.strip .on { background: #292929; color: #fff; }
.strip svg { width: 15px; height: 15px; }
.strip hr { width: 100%; height: 1px; border: 0; margin: -3px 0; background: #6e6e6e; flex: none; }
.strip .sub::after { right: auto; left: 1px; bottom: 0; }
.dots { height: 7px; background: radial-gradient(#aaa 50%, transparent 60%) 0 0 / 3px 3px; }
.strip .swatch { background: #c6aedd; }
.dot { width: 13px; height: 13px; border-radius: 50%; background: radial-gradient(#ddd 1px, #808080 1px); }
.vhandle { position: absolute; right: -4px; top: 49%; display: grid; gap: 4px; }
.vhandle i { width: 3px; height: 6px; border: solid #888; border-width: 0 1px; }
.vhandle b { border: 3px solid transparent; border-left-color: #aaa; border-right: 0; }

.positions { height: 170px; flex: none; position: relative; display: flex; flex-direction: column; }
.hhandle { position: absolute; top: -4px; left: 48%; display: flex; gap: 6px; }
.hhandle i { width: 5px; height: 2px; background: #888; }
.ptabs, .stabs { display: flex; gap: 5px; height: 26px; flex: none; color: #c8c8c8; }
.ptabs button, .stabs button { background: #3c3c3c; border-radius: 2px 2px 0 0; padding: 0 5px; }
.ptabs .on, .stabs .on { background: #525252; color: #fff; }
.ptabs button span { display: inline-block; margin-left: 5px; width: 16px; background: #808080; border-radius: 2px; height: 17px; line-height: 17px; color: #fff; }
.feedback { margin-left: auto; background: #3c3c3c; display: flex; align-items: center; gap: 8px; padding: 0 5px; }
.feedback svg { width: 14px; height: 13px; }
.pbody { flex: 1; background: #525252; border-radius: 0 0 3px 3px; padding: 5px 5px 0; display: flex; flex-direction: column; }
.filters { display: flex; gap: 5px; height: 19px; margin-bottom: 5px; }
.filters .search { width: 180px; background: #292929; }
.select { position: relative; height: 19px; background: #292929; border-radius: 2px; color: #fff; width: 150px; }
.select select { appearance: none; width: 100%; height: 19px; padding: 0 4px; display: block; }
.select::after { content: ""; position: absolute; right: 4px; top: 7px; border: 3px solid transparent; border-top: 6px solid #8a8a8a; border-bottom: 0; }
.pnew { margin-left: auto; width: 91px; background: #009444; color: #fff; border-radius: 3px; display: flex; align-items: center; justify-content: center; gap: 6px; }
.pnew svg { width: 14px; height: 14px; }
.pclose { width: 101px; background: #26774a; color: #98b3a3; border-radius: 3px 0 0 3px; }
.pmore { width: 19px; margin-left: -4px; background: #009444; border-radius: 0 3px 3px 0; display: grid; place-items: center; }
.pmore::after { content: ""; border: 3px solid transparent; border-top: 7px solid #fff; border-bottom: 0; }
.ptable { display: block; width: 100%; flex: 1; background: #292929; border-radius: 3px; padding-top: 5px; }
.ptable thead, .ptable tr { display: flex; width: 100%; }
.ptable th { flex: 1; height: 15px; line-height: 15px; padding: 0; font-weight: normal; color: #8a8a8a; border-right: 1px solid #444; }
.ptable .pad, .ptable .end { flex: none; width: 77px; border: 0; }
.ptable .end { width: 100px; }
.ptable .last { border: 0; }
.totals { height: 30px; flex: none; display: flex; align-items: center; color: #e0e0e0; padding-top: 2px; }
.totals span { width: 250px; border-right: 1px solid #606060; padding-left: 9px; line-height: 15px; }
.totals span:first-child { width: 246px; padding-left: 5px; }
.totals span:nth-child(7) { border: 0; flex: 1; }
.totals button { margin: 0 2px 2px 0; }
.totals svg, .totals button { width: 14px; height: 14px; }

.side { width: 387px; flex: none; display: flex; flex-direction: column; }
.stabs { height: 25px; }
.sbody { flex: 1; min-height: 0; background: #525252; border-radius: 0 3px 3px 3px; padding: 5px 0 5px 5px; display: flex; flex-direction: column; gap: 5px; }
.spick { display: flex; gap: 5px; padding-right: 5px; }
.spick .select { width: 183px; margin-right: auto; }
.scroller { flex: 1; min-height: 0; display: flex; }
.cards { flex: 1; min-height: 0; overflow: hidden; background: #292929; border-radius: 3px; padding: 5px 6px 0 5px; }
.card { background: #525252; border-radius: 3px; padding: 6px 5px 5px; margin-bottom: 5px; }
.card h2 { height: 19px; margin-bottom: 5px; display: flex; align-items: center; gap: 5px; color: #d0d0d0; }
.card h2 .sq { margin-left: auto; }
.vscroll { width: 17px; flex: none; display: flex; flex-direction: column; align-items: center; padding-bottom: 1px; }
.vscroll i { width: 7px; height: 45%; border-radius: 3px; background: #808080; margin: 3px 0 auto; }
.vscroll span { border: 3px solid transparent; }
.vscroll .u { border-bottom: 6px solid #808080; border-top: 1px solid transparent; }
.vscroll .d { border-top: 6px solid #808080; border-bottom: 0; }
.order { background: #292929; border-radius: 3px; padding: 9px 10px 10px; margin: 0; }
.pair { display: flex; align-items: center; height: 19px; color: #fff; }
.pair .ok { margin: 0 9px 0 3px; }
.pair em { margin: 0 10px 0 auto; font-style: normal; color: #ee6409; }
.order .sq { background: #3c3c3c; }
.otabs { display: flex; gap: 1px; margin: 5px 0 11px; }
.otabs button { flex: 1 1 74px; height: 22px; }
.otabs button:last-child { flex-basis: 99px; }
.deal { display: grid; grid-template-columns: 162px 1fr; gap: 5px; margin-bottom: 5px; }
.deal button { height: 51px; border-radius: 4px; background: #1a1a1a; line-height: 16px; color: #ee6409; }
.deal b { display: block; font: 17px/22px "Liberation Sans", Arial, sans-serif; }
.deal small { font-size: 14px; }
.deal .buy { border: 1px solid #1fa12e; color: #1fa12e; }
.spread { text-align: center; margin: 6px 0 11px; color: #fff; }
.qty { display: grid; grid-template-columns: 1fr 1fr; color: #fff; }
.ln { height: 20px; display: flex; align-items: center; gap: 7px; }
.qty label, .stops label { display: flex; align-items: center; gap: 5px; }
input[type=checkbox] { appearance: none; width: 15px; height: 15px; background: #1a1a1a; border-radius: 2px; }
.info { border: 1px solid #707070; border-radius: 2px; width: 15px; height: 15px; text-align: center; font: italic 10px/13px "Liberation Serif", serif; color: #999; }
.field { display: flex; align-items: center; gap: 5px; height: 19px; }
.num { position: relative; width: 116px; height: 19px; background: #1a1a1a; border-radius: 2px; display: flex; align-items: center; padding: 0 3px 0 22px; }
.num.pips { background: #222; }
.num input { width: 100%; min-width: 0; }
.sp { position: absolute; left: 5px; top: 3px; display: grid; gap: 3px; }
.pips .sp { left: auto; right: 3px; opacity: .6; }
.sp::before, .sp::after { content: ""; border: 4px solid transparent; border-bottom: 5px solid #808080; border-top: 0; }
.sp::after { border-top: 5px solid #808080; border-bottom: 0; }
.qty p { padding-top: 6px; }
.stops { display: flex; justify-content: space-between; padding: 23px 40px 18px 0; color: #fff; }
.stops label { min-width: 74px; }
.comment { position: relative; height: 49px; margin-bottom: 5px; }
.comment textarea { width: 100%; height: 49px; background: #1a1a1a; border-radius: 2px; padding: 5px; resize: none; display: block; }
.comment span { position: absolute; right: 5px; bottom: 1px; color: #808080; }
.green-btn { width: 100%; height: 19px; border-radius: 3px; background: #009444; color: #fff; display: block; }
.depth { display: grid; grid-template-columns: 1fr 1fr; gap: 6px; }
.depth ul { background: #292929; border-radius: 2px; height: 196px; padding: 5px; }
.depth li { position: relative; z-index: 0; display: flex; justify-content: space-between; align-items: center; height: 19px; margin-bottom: 5px; padding: 0 5px; color: #fff; }
.depth i { position: absolute; z-index: -1; top: 0; right: 0; height: 19px; background: #f15a24; border-radius: 2px; }
.depth .ask i { right: auto; left: 0; background: #009444; }
.cal { background: #292929; border-radius: 3px; padding: 0 5px 10px; }
.cal .green-btn { width: 139px; margin: 8px auto 0; }
.event { height: 93px; padding: 12px 5px 0; position: relative; color: #fff; }
.event + .event { box-shadow: 0 -1px #444 inset, 0 -1px #444; }
.event:last-child { box-shadow: 0 -1px #444; }
.event.past { color: #bdbdbd; }
.event.now::before { content: ""; position: absolute; left: -5px; top: 10px; width: 8px; height: 19px; background: #009444; clip-path: polygon(0 0, 100% 50%, 0 100%); }
.event header { display: flex; align-items: center; height: 14px; gap: 5px; }
.event header svg:first-child { color: inherit; }
.event.past header svg:first-child { color: #808080; }
.event.now header svg:first-child { color: #009444; }
.event header span { color: #808080; }
.event header .flag { width: 21px; height: 15px; margin: 0 0 0 auto; }
.event header .flag + span { width: 33px; }
.event h3 { margin: 7px 0 5px; font: bold 11px/14px "Liberation Sans", Arial, sans-serif; }
.event dl { margin: 0; display: grid; grid-template-columns: repeat(4, 1fr); }
.event dl div { display: flex; flex-direction: column-reverse; text-align: center; height: 36px; justify-content: space-between; border-right: 1px solid #444; }
.event dl div:last-child { border: 0; }
.event dt { color: #808080; margin-bottom: 1px; }
.event dd { margin: 3px 0 0; }
.event dd svg { width: 16px; height: 13px; stroke: none; display: inline-block; }
.empty { background: #292929; height: 60px; border-radius: 3px; }

.status { height: 26px; flex: none; display: flex; align-items: center; gap: 4px; color: #d0d0d0; padding: 2px 5px 0 0; }
.live { width: 5px; height: 5px; border-radius: 50%; background: #0a8a0a; }
.clock { margin-left: auto; display: flex; align-items: center; gap: 10px; }
.clock button { display: flex; align-items: center; gap: 5px; color: #fff; }
.clock strong { font-weight: normal; color: #fff; margin-right: -5px; }
.clock i { width: 1px; height: 13px; background: #444; }
.clock label { display: flex; align-items: center; gap: 5px; font-size: 9px; font-weight: bold; color: #e6e6e6; }
.clock input { width: 20px; height: 13px; background: #525252; }
.edge { width: 6px; flex: none; background: linear-gradient(#fff 269px, #04060b 269px 640px, #17130f 750px, #5a3d28 950px, #2a1a10 1100px, #120a06); }
.pointer { position: absolute; top: 0; right: 0; width: 700px; height: 224px; pointer-events: none; }
```
FILE: script.js
```js
const $ = id => document.getElementById(id);

/* Watch list: symbol, change, bid, ask, row class */
const quotes = [
  ['EURUSD', '-12.1 (-0.11%)', '1.0690|3', '1.0690|6', ''],
  ['GBPUSD', '-15.8 (-0.12%)', '1.2640|4', '1.2640|9', ''],
  ['XAUUSD', '+50 (+0.02%)', '2359.40|', '2359.64|', 'hot'],
  ['XAGUSD', '-494 (-1.61%)', '30.223|', '30.237|', 'hot upc'],
  ['USDJPY', '+8.2 (+0.05%)', '159.00|7', '159.01|5', ''],
  ['EURJPY', '-10.4 (-0.06%)', '169.98|1', '169.99|9', '']
];
const price = p => p.replace(/\|(.*)/, '<small>$1</small>');
$('watch').innerHTML = quotes.map(([s, c, b, a, k]) =>
  `<li class="${k}"><span class="grip"></span><svg class="ok"><use href="#i-check"/></svg>${s}<em>${c}</em><b>${price(b)}</b><b>${price(a)}</b></li>`).join('');

/* Calendar: class, time, when, flag, currency, title, impact, forecast, previous */
const events = [
  ['now', '09:00', 'Jetzt (Ganztägig)', 'eu', 'EUR', 'EcoFin Meeting', 2, '—', '—'],
  ['past', '09:00', '6 hours ago', 'de', 'EUR', 'German Buba President Nagel speech', 2, '—', '—'],
  ['', '15:45', 'in 22 minutes', 'us', 'USD', 'S&amp;P Global Services PMI', 3, '53.7', '54.8'],
  ['', '15:45', 'in 22 minutes', 'us', 'USD', 'S&amp;P Global Manufacturing PMI', 3, '51', '51.3'],
  ['', '15:45', 'in 22 minutes', 'us', 'USD', 'S&amp;P Global Composite PMI', 2, '—', '54.5']
];
const impact = n => {
  const c = n === 3 ? '#e03020' : '#f90';
  return `<svg viewBox="0 0 16 13"><path fill="${c}" d="M0 7h4v6H0zM6 4h4v9H6z"/><path fill="${n === 3 ? c : '#555'}" d="M12 1h4v12h-4z"/></svg>`;
};
$('events').innerHTML = events.map(([k, t, w, f, cur, title, n, fc, pv]) =>
  `<article class="event ${k}"><header><svg><use href="#i-clock"/></svg>${t} (UTC+2)<span>Zeit:</span>${w}<svg class="flag"><use href="#f-${f}"/></svg><span>${cur}</span></header>
  <h3>${title}</h3><dl><div><dt>Einfluss</dt><dd>${impact(n)}</dd></div><div><dt>Aktuell</dt><dd>—</dd></div><div><dt>Prognose</dt><dd>${fc}</dd></div><div><dt>Vorher</dt><dd>${pv}</dd></div></dl></article>`).join('');

/* Candles as "colour high top bottom low" */
const eur = `r145 157 168 173,g157 160 167 172,g153 157 165 169,r150 156 160 163,g150 155 159 160,g149 154 155 160,r149 154 171 173,g162 163 171 173,r161 163 167 169,r165 166 173 175,g165 171 173 179,r165 172 176 179,g147 152 175 176,r151 153 169 171,r157 167 175 177,r160 176 191 193,r184 190 212 213,g148 191 211 217,r164 191 204 207,r196 203 233 249,r230 233 263 267,r262 262 300 302,g283 286 300 305,r285 287 293 300,g285 290 293 296,r285 290 294 296,g291 293 298 299,g292 293 294 299,r290 293 297 298,r289 296 299 300,g287 288 299 300,g284 285 290 292,r282 285 292 295,r289 290 298 305,r297 299 305 307,r298 303 318 322,r308 315 365 370,r350 352 382 386,r360 380 391 420,g365 372 391 406,r362 368 378 381,r365 370 388 406,r378 386 425 428,g389 390 426 427,g366 370 391 398,r360 368 376 380,g352 356 374 378,r350 356 366 372,g350 354 366 370,r350 355 362 366,r356 361 364 368,g356 360 364 368,g354 358 362 366,r352 357 366 370,g354 358 366 370,r356 358 364 372,g354 358 365 368,r356 358 366 376,g346 352 368 380,g344 348 354 362,r344 348 354 360,g340 342 352 360,r338 342 350 356,g334 338 350 354,g328 332 342 348,r326 332 338 344,g318 322 338 342,g312 316 326 332,g306 310 320 326,r302 308 316 322,g298 302 314 320,g296 300 306 314,r290 299 308 316,r300 306 312 318,g302 304 314 320,r300 305 318 326,g306 310 318 330,g300 304 312 320,g294 298 306 312,r292 298 304 310,r294 302 306 312,g292 296 306 310,g290 294 300 306,r292 296 304 308,r300 304 324 324,r320 322 331 339,g318 329 331 339,r327 329 334 338,r332 332 337 348,g302 307 336 348,g273 276 309 311,r251 275 295 298,g287 294 295 303,g286 292 295 299,r285 292 301 304,g290 291 301 307,r291 291 294 299,g289 292 294 296,g290 291 294 299,g289 289 293 294,r289 289 295 296,r292 294 297 298,g288 290 297 301,r286 289 294 296,r290 295 296 298,r295 295 300 301,g293 295 300 301,r288 295 309 315,g289 297 309 321,g288 290 298 303,r283 291 297 306,g268 272 297 301,g266 271 273 280,r266 271 281 287,r276 280 285 290,g271 276 285 286,g273 275 277 290,r274 274 278 280,r277 279 284 285,r282 283 286 287,g280 282 286 287,r281 282 284 285,g280 283 288 289,g277 280 284 285,g274 278 281 282,r277 278 280 283,r276 279 282 288,r280 280 293 294,g287 287 293 294,g282 286 288 290,r285 286 297 298,r294 296 306 310,r298 305 321 322,r320 320 335 344,g314 319 335 341,g307 313 320 321,r306 313 339 343,g308 330 339 342,g312 320 331 336,r308 320 326 328,r324 325 354 354,r346 353 354 361,r348 353 354 360,g333 347 354 354,r345 347 358 360,r355 356 363 364,g358 359 364 365,r358 359 363 365,g352 353 363 363,g352 354 356 361,g346 347 355 358,g333 334 348 349,r334 334 336 342,g331 331 337 339,r329 331 334 339,r327 334 349 351,r347 347 408 422,g374 383 409 412,g369 370 385 398,r370 370 403 411,g385 387 403 406,g375 376 388 396,r371 376 385 391`;
const eurVol = [56,10,5,6,10,15,20,15,10,9,12,25,32,27,24,24,28,54,49,48,36,32,28,15,14,8,5,6,8,14,13,12,20,11,15,34,41,41,44,43,39,50,47,54,34,23,22,18,13,8,4,10,9,20,16,12,10,11,15,41,41,35,31,25,24,32,36,36,26,22,15,20,16,7,2,5,8,16,16,13,11,13,17,26,30,28,28,20,22,48,41,46,33,23,27,19,19,7,3,3,7,13,12,10,8,9,12,14,14,15,20,22,24,30,38,36,34,28,22,18,14,5,3,5,8,10,9,8,12,14,18,20,26,34,40,50,44,48,36,33,30,24,23,19,19,7,1,3,7,15,16,13,9,7,12,24,44,38,30,24,25,29,20];

/* GBPJPY course as index/level pairs, interpolated to one close per hour */
const way = [0,776,2,800,4,780,6,768,8,784,10,743,13,694,15,719,17,751,19,784,21,857,24,816,27,808,29,792,31,743,33,670,35,670,36,735,37,784,38,890,40,931,42,950,44,931,46,918,48,926,50,895,52,874,54,890,56,898,58,931,59,963,60,939,62,906,64,890,66,849,68,825,70,816,72,803,74,797,76,800,78,833,80,833,82,816,84,784,86,771,88,792,90,789,91,780,93,800,100,789,106,792,108,751,110,730,112,743,114,727,116,738,125,735,130,730,132,710,134,689,136,719,138,735,140,694,142,712,145,705,148,710,150,686,152,702,154,702,155,719,156,764,158,727,160,743,162,730];
const level = i => { let k = 0; while (k < way.length - 4 && way[k + 2] < i) k += 2; const f = (i - way[k]) / (way[k + 2] - way[k]); return way[k + 1] + f * (way[k + 3] - way[k + 1]); };
let prev = 760;
const gbp = Array.from({ length: 163 }, (_, i) => {
  const c = Math.round(level(i) + Math.sin(i * 2.4) * 6), o = prev; prev = c;
  return (c < o ? 'g' : 'r') + [Math.min(o, c) - 3 - i * 7 % 13, Math.min(o, c), Math.max(o, c), Math.max(o, c) + 3 + i * 5 % 14].join(' ');
}).join(',');
const gbpVol = eurVol.map((v, i) => Math.min(84, Math.round(v * 1.5 + 6)));

const X0 = 5.5, STEP = 7.979, AXIS = 1684;
const times = ['23:00', '14 Jun', '19:00', '17 Jun', '15:00', '18 Jun', '11:00', '21:00', '19 Jun', '17:00', '20 Jun', '13:00', '23:00', '21 Jun', '19:00', '22 Jun', '15:00', '23 Jun', '11:00'];

function draw(id, o) {
  const base = o.base, line = (x1, y1, x2, y2, c) => `<path d="M${x1} ${y1}L${x2} ${y2}" stroke="${c}"/>`;
  const px = v => Math.round(v) + .5;
  let s = '';
  for (let x = 13; x < AXIS; x += STEP * 5) s += line(px(x), 0, px(x), base, '#1b1b1e') + line(px(x), base, px(x), base + 3, '#aaa');
  for (let k = 0; k < o.rows; k++) s += line(0, px(o.y0 + k * o.dy), AXIS, px(o.y0 + k * o.dy), '#1b1b1e');
  for (const x of [29, 221, 404, 412, 604, 795, 987, 1179, 1370, 1561]) s += line(x + .5, 0, x + .5, base, '#505050');
  o.vol.forEach((v, i) => { const x = px(X0 + i * STEP - .5); s += line(x, base - 1 - v, x, base - 1, '#2a9fcf'); });
  o.candles.split(',').forEach((t, i) => {
    const c = t[0] === 'g' ? '#009444' : '#f15a24', [h, a, b, l] = t.slice(1).split(' ').map(n => n - o.top), x = Math.round(X0 + i * STEP - .5);
    s += line(x + .5, h, x + .5, l, c) + `<rect x="${x - 2}" y="${a}" width="5" height="${Math.max(1, b - a)}" fill="${c}" stroke="none"/>`;
  });
  s += line(0, base + .5, 1731, base + .5, '#aaa') + line(AXIS + .5, 0, AXIS + .5, base, '#aaa');
  s += (o.extra || '') + line(0, o.now + .5, AXIS, o.now + .5, '#f15a24');
  for (const [y, t] of o.labels) s += line(AXIS, px(y), AXIS + 3, px(y), '#aaa') + `<text x="${AXIS + 5}" y="${Math.round(y) + 3}">${t.slice(0, -1)}<tspan>${t.slice(-1)}</tspan></text>`;
  s += `<text x="5" y="${base + 15}">12 Jun 2024, UTC+2</text>`;
  times.forEach((t, i) => { s += `<text x="${Math.round(212 + i * 79.8)}" y="${base + 15}" text-anchor="middle">${t}</text>`; });
  s += `<path d="M1678 ${o.now}l7-10h44a2 2 0 0 1 2 2v17a2 2 0 0 1-2 2h-44z" fill="#f15a24" stroke="none"/><text x="${AXIS + 5}" y="${o.now + 4}" style="fill:#111">${o.tag}</text>`;
  s += `<path d="M1670 10.500h4.500v${o.ruler}h-4.500" stroke="#aaa"/><text transform="translate(1670 ${10 + o.ruler / 2}) rotate(-90)" text-anchor="middle">${o.pips}</text>`;
  s += `<path d="M1272.500 ${base - 8.500}h22l4-5 4 5h11a2 2 0 0 1 2 2v15a2 2 0 0 1-2 2h-41a2 2 0 0 1-2-2v-15a2 2 0 0 1 2-2z" fill="#000" stroke="#bbb"/><path d="M1275.500 ${base - 5}v11M1278.500 ${base - 5}v11" stroke="#bbb" stroke-dasharray="1 2"/><text x="1285" y="${base + 4}">36:49</text>`;
  $(id).innerHTML = s;
}
const scale = (n, y, dy, from, by, d) => Array.from({ length: n }, (_, i) => [y + i * dy, (from - i * by).toFixed(d)]);
draw('plot1', { top: 61, base: 485, y0: 6, dy: 37.43, rows: 13, candles: eur, vol: eurVol, now: 323, tag: '1.0690<tspan>3</tspan>', pips: '50.0 Pips', ruler: 93,
  labels: scale(12, 43, 37.45, 1.084, .002, 5),
  extra: '<path d="M.5 46V97" stroke="#f15a24"/>' });
draw('plot2', { top: 613, base: 492, y0: 16, dy: 24.6, rows: 20, candles: gbp, vol: gbpVol, now: 116, tag: '200.99<tspan>2</tspan>', pips: '100.0 Pips', ruler: 123,
  labels: scale(19, 16, 24.6, 201.8, .2, 3),
  extra: '<path d="M0 114.500H1684" stroke="#8a6a30"/>' });
```
